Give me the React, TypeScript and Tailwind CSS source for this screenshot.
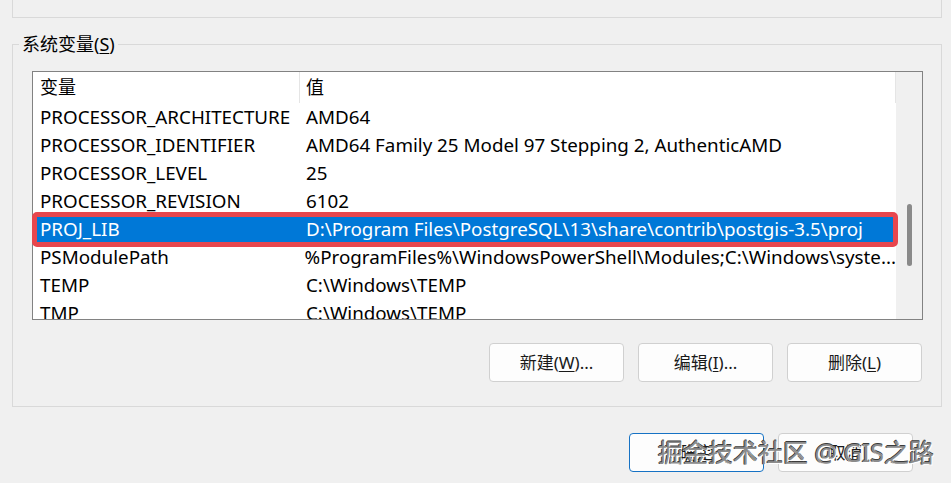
import React from 'react';

const rows = [
  { name: 'PROCESSOR_ARCHITECTURE', value: 'AMD64' },
  { name: 'PROCESSOR_IDENTIFIER', value: 'AMD64 Family 25 Model 97 Stepping 2, AuthenticAMD' },
  { name: 'PROCESSOR_LEVEL', value: '25' },
  { name: 'PROCESSOR_REVISION', value: '6102' },
  { name: 'PROJ_LIB', value: 'D:\\Program Files\\PostgreSQL\\13\\share\\contrib\\postgis-3.5\\proj', selected: true },
  { name: 'PSModulePath', value: '%ProgramFiles%\\WindowsPowerShell\\Modules;C:\\Windows\\syste...' },
  { name: 'TEMP', value: 'C:\\Windows\\TEMP' },
  { name: 'TMP', value: 'C:\\Windows\\TEMP' },
];

function DlgButton({ label, hotkey, suffix, primary }: { label: string; hotkey?: string; suffix?: string; primary?: boolean }) {
  return (
    <button
      className={
        'h-[39px] w-[135px] rounded-[4px] border bg-[#fdfdfd] text-[17px] text-[#1a1a1a] ' +
        (primary ? 'border-[#1672c4]' : 'border-[#d0d0d0]')
      }
    >
      {label}
      {hotkey && (
        <>
          (<span className="underline underline-offset-2">{hotkey}</span>)
        </>
      )}
      {suffix}
    </button>
  );
}

export default function App() {
  return (
    <div
      className="relative h-[483px] w-[951px] overflow-hidden bg-[#f0f0f0] text-black"
      style={{ fontFamily: '"Noto Sans", "Noto Sans CJK SC", sans-serif' }}
    >
      {/* bottom of the user variables box */}
      <div className="ml-[12px] h-[18px] w-[930px] border-x border-b border-[#d9d9d9]" />

      <fieldset className="ml-[12px] mt-[14px] w-[930px] border border-[#d9d9d9] pb-[24px]">
        <legend className="ml-[6px] px-[3px] text-[18px] leading-[24px]">
          系统变量(<span className="underline underline-offset-2">S</span>)
        </legend>

        <div className="relative ml-[19px] mt-[15px] h-[249px] w-[891px] border border-[#828282] bg-white">
          <div className="flex h-full">
            <div className="w-[863px] overflow-hidden">
              <div className="flex h-[31px] items-center text-[18px]">
                <div className="w-[267px] border-r border-[#e5e5e5] pl-[7px] leading-[31px]">变量</div>
                <div className="flex-1 border-r border-[#e5e5e5] pl-[6px] leading-[31px]">值</div>
              </div>
              {rows.map((r) => (
                <div
                  key={r.name}
                  className={
                    'flex h-[28px] items-center whitespace-nowrap text-[18.8px] ' +
                    (r.selected ? 'bg-[#0078d7] text-white' : '')
                  }
                >
                  <div className="w-[267px] pl-[7px]">{r.name}</div>
                  <div className="flex-1 pl-[6px]">{r.value}</div>
                </div>
              ))}
            </div>
            <div className="flex w-[26px] justify-center bg-[#f0f0f0] pt-[132px]">
              <div className="h-[62px] w-[5px] rounded-full bg-[#8a8a8a]" />
            </div>
          </div>
          {/* highlight drawn around the selected row */}
          <div className="absolute left-[-1px] top-[140px] h-[35px] w-[866px] rounded-[5px] border-[5px] border-[#e8464d]" />
        </div>

        <div className="mt-[23px] flex justify-end gap-[14px] pr-[19px]">
          <DlgButton label="新建" hotkey="W" suffix="..." />
          <DlgButton label="编辑" hotkey="I" suffix="..." />
          <DlgButton label="删除" hotkey="L" />
        </div>
      </fieldset>

      <div className="mt-[26px] flex justify-end gap-[14px] pr-[38px]">
        <DlgButton label="确定" primary />
        <DlgButton label="取消" />
      </div>

      <div className="pointer-events-none absolute left-[658px] top-[436px] whitespace-nowrap text-[25px] leading-[32px] text-[#8c8c8c] [text-shadow:1px_1px_0_#ffffff,-1px_0_0_#3c3c3c,0_-1px_0_#3c3c3c]">
        掘金技术社区 @ GIS之路
      </div>
    </div>
  );
}
